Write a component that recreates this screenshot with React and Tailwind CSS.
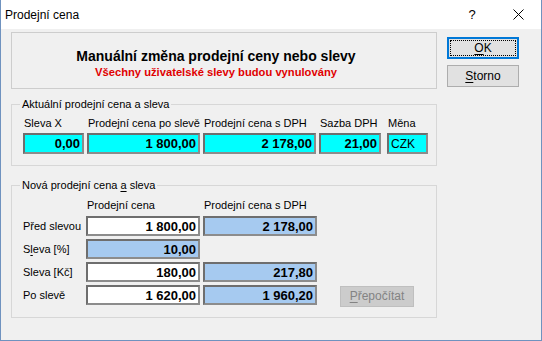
import React from "react";

const FONT = "font-['Liberation_Sans',Arial,sans-serif]";

function Field({ className, children, left }) {
  return (
    <div
      className={
        "flex items-center border-2 border-t-[#6e6e6e] border-l-[#6e6e6e] border-b-[#8c8c8c] border-r-[#8c8c8c] " +
        (left ? "justify-start pl-[2px] text-[12px] font-normal " : "justify-end pr-[2px] text-[13px] font-bold ") +
        className
      }
    >
      <span className="leading-none">{children}</span>
    </div>
  );
}

export default function App() {
  return (
    <div className={"w-[542px] h-[341px] flex flex-col bg-[#f0f0f0] border-l border-r border-b border-[#6f92bf] text-black " + FONT}>
      {/* Title bar */}
      <div className="h-[29px] bg-white flex items-center shrink-0">
        <div className="pl-[4px] text-[12px] flex-1">Prodejní cena</div>
        <div className="w-[46px] h-full flex items-center justify-center text-[13px]">?</div>
        <div className="w-[46px] h-full flex items-center justify-center">
          <svg width="11" height="11" viewBox="0 0 11 11">
            <path d="M0.5 0.5 L10.5 10.5 M10.5 0.5 L0.5 10.5" stroke="#000" strokeWidth="1" fill="none" />
          </svg>
        </div>
      </div>

      {/* Body */}
      <div className="flex-1 flex items-start pl-[10px] pt-[3px]">
        {/* Left column */}
        <div className="w-[426px] flex flex-col">
          {/* Header panel */}
          <div className="h-[57px] border border-[#cdcdcd] flex flex-col items-center pt-[15px] pr-[16px]">
            <div className="text-[14px] font-bold leading-[17px]">Manuální změna prodejní ceny nebo slevy</div>
            <div className="text-[11.2px] font-bold leading-[15px] text-[#e00000]">Všechny uživatelské slevy budou vynulovány</div>
          </div>

          {/* Group 1 */}
          <fieldset className="mt-[9px] border border-[#d7d7d7] p-0 m-0">
            <legend className="ml-[8px] px-[2px] text-[11px] leading-[13px]">Aktuální prodejní cena a sleva</legend>
            <div className="flex pl-[11px] pt-[6px] pb-[11px] text-[11px] leading-[13px] gap-[3px]">
              <div className="flex flex-col gap-[3px]">
                <span className="pl-[1px]">Sleva X</span>
                <Field className="w-[61px] h-[21px] bg-[#00ffff]">0,00</Field>
              </div>
              <div className="flex flex-col gap-[3px]">
                <span className="pl-[1px]">Prodejní cena po slevě</span>
                <Field className="w-[113px] h-[21px] bg-[#00ffff]">1 800,00</Field>
              </div>
              <div className="flex flex-col gap-[3px]">
                <span className="pl-[1px]">Prodejní cena s DPH</span>
                <Field className="w-[113px] h-[21px] bg-[#00ffff]">2 178,00</Field>
              </div>
              <div className="flex flex-col gap-[3px]">
                <span className="pl-[1px]">Sazba DPH</span>
                <Field className="w-[62px] h-[21px] bg-[#00ffff]">21,00</Field>
              </div>
              <div className="flex flex-col gap-[3px] ml-[3px]">
                <span className="pl-[1px]">Měna</span>
                <Field left className="w-[41px] h-[21px] bg-[#00ffff]">CZK</Field>
              </div>
            </div>
          </fieldset>

          {/* Group 2 */}
          <fieldset className="mt-[13px] border border-[#d7d7d7] p-0 m-0">
            <legend className="ml-[8px] px-[2px] text-[11px] leading-[13px]">
              Nová prodejní cena <span className="underline underline-offset-2">a</span> sleva
            </legend>
            <div className="flex flex-col pl-[11px] pt-[7px] pb-[10px] text-[11px] leading-[13px]">
              <div className="flex mb-[4px]">
                <span className="w-[64px]" />
                <span className="w-[117px]">Prodejní cena</span>
                <span>Prodejní cena s DPH</span>
              </div>
              <div className="flex flex-col gap-[3px]">
                <div className="flex items-center">
                  <span className="w-[63px]">Před slevou</span>
                  <Field className="w-[114px] h-[20px] bg-white">1 800,00</Field>
                  <Field className="ml-[3px] w-[114px] h-[20px] bg-[#a6caf0]">2 178,00</Field>
                </div>
                <div className="flex items-center">
                  <span className="w-[63px]">
                    S<span className="underline underline-offset-2">l</span>eva [%]
                  </span>
                  <Field className="w-[114px] h-[20px] bg-[#a6caf0]">10,00</Field>
                </div>
                <div className="flex items-center">
                  <span className="w-[63px]">Sleva [Kč]</span>
                  <Field className="w-[114px] h-[20px] bg-white">180,00</Field>
                  <Field className="ml-[3px] w-[114px] h-[20px] bg-[#a6caf0]">217,80</Field>
                </div>
                <div className="flex items-start">
                  <span className="w-[63px] h-[20px] flex items-center">Po slevě</span>
                  <Field className="w-[114px] h-[20px] bg-white">1 620,00</Field>
                  <Field className="ml-[3px] w-[114px] h-[20px] bg-[#a6caf0]">1 960,20</Field>
                  <div className="ml-[23px] mt-[1px] w-[74px] h-[21px] bg-[#cccccc] border border-[#bfbfbf] flex items-center justify-center text-[12px] text-[#838383]">
                    <span>
                      <span className="underline underline-offset-2">P</span>řepočítat
                    </span>
                  </div>
                </div>
              </div>
            </div>
          </fieldset>
        </div>

        {/* Buttons */}
        <div className="ml-[10px] pt-[5px] flex flex-col gap-[6px]">
          <div className="w-[72px] h-[22px] bg-[#e1e1e1] border-2 border-[#0078d7] flex items-center justify-center text-[12px] outline-1 outline-dotted outline-black outline-offset-[-4px]">
            <span>
              <span className="underline underline-offset-2">O</span>K
            </span>
          </div>
          <div className="w-[72px] h-[22px] bg-[#e1e1e1] border border-[#adadad] flex items-center justify-center text-[12px]">
            <span>
              <span className="underline underline-offset-2">S</span>torno
            </span>
          </div>
        </div>
      </div>
    </div>
  );
}
